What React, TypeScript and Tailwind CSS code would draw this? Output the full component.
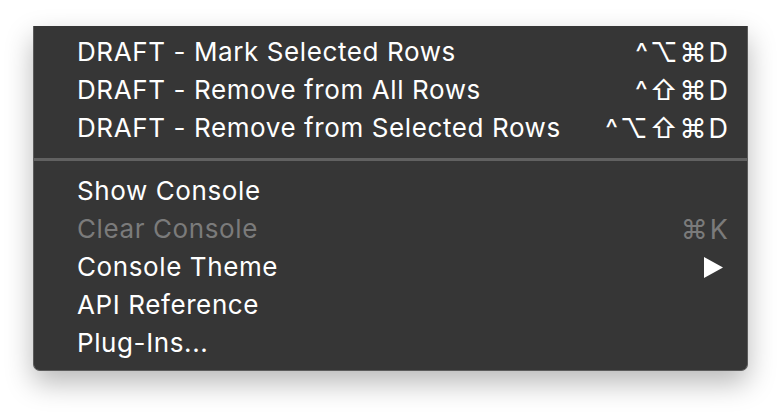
const font = { fontFamily: 'Inter, "DejaVu Sans", sans-serif' }

type Item = { label: string; shortcut?: string; disabled?: boolean; submenu?: boolean }

const groups: Item[][] = [
  [
    { label: 'DRAFT - Mark Selected Rows', shortcut: '^⌥⌘D' },
    { label: 'DRAFT - Remove from All Rows', shortcut: '^⇧⌘D' },
    { label: 'DRAFT - Remove from Selected Rows', shortcut: '^⌥⇧⌘D' }
  ],
  [
    { label: 'Show Console' },
    { label: 'Clear Console', shortcut: '⌘K', disabled: true },
    { label: 'Console Theme', submenu: true },
    { label: 'API Reference' },
    { label: 'Plug-Ins...' }
  ]
]

function Row({ item }: { item: Item }) {
  return (
    <div
      className={`flex h-[38px] items-center justify-between pl-[43px] pr-[17px] text-[26px] leading-none ${
        item.disabled ? 'text-[#7b7b7b]' : 'text-white'
      }`}>
      <span className="tracking-[0.6px]">{item.label}</span>
      {item.shortcut && <span className="text-[27px] tracking-[2px]">{item.shortcut}</span>}
      {item.submenu && (
        <svg width="19" height="21" viewBox="0 0 19 21" className="mr-[7px]">
          <path d="M0 0 L19 10.5 L0 21 Z" fill="#ffffff" />
        </svg>
      )}
    </div>
  )
}

export default function App() {
  return (
    <div className="h-[412px] w-[782px] overflow-hidden bg-white pl-[33px] pt-[26px]" style={font}>
      <div className="w-[715px] rounded-b-[7px] border-x border-b border-[#5c5c5c] bg-[#363636] pt-[7px] pb-[8px] shadow-[0_12px_28px_rgba(0,0,0,0.28)]">
        {groups.map((group, gi) => (
          <div key={gi}>
            {gi > 0 && (
              <div className="py-[11px]">
                <div className="h-[3px] bg-[#616161]" />
              </div>
            )}
            {group.map((item, i) => (
              <Row key={i} item={item} />
            ))}
          </div>
        ))}
      </div>
    </div>
  )
}
